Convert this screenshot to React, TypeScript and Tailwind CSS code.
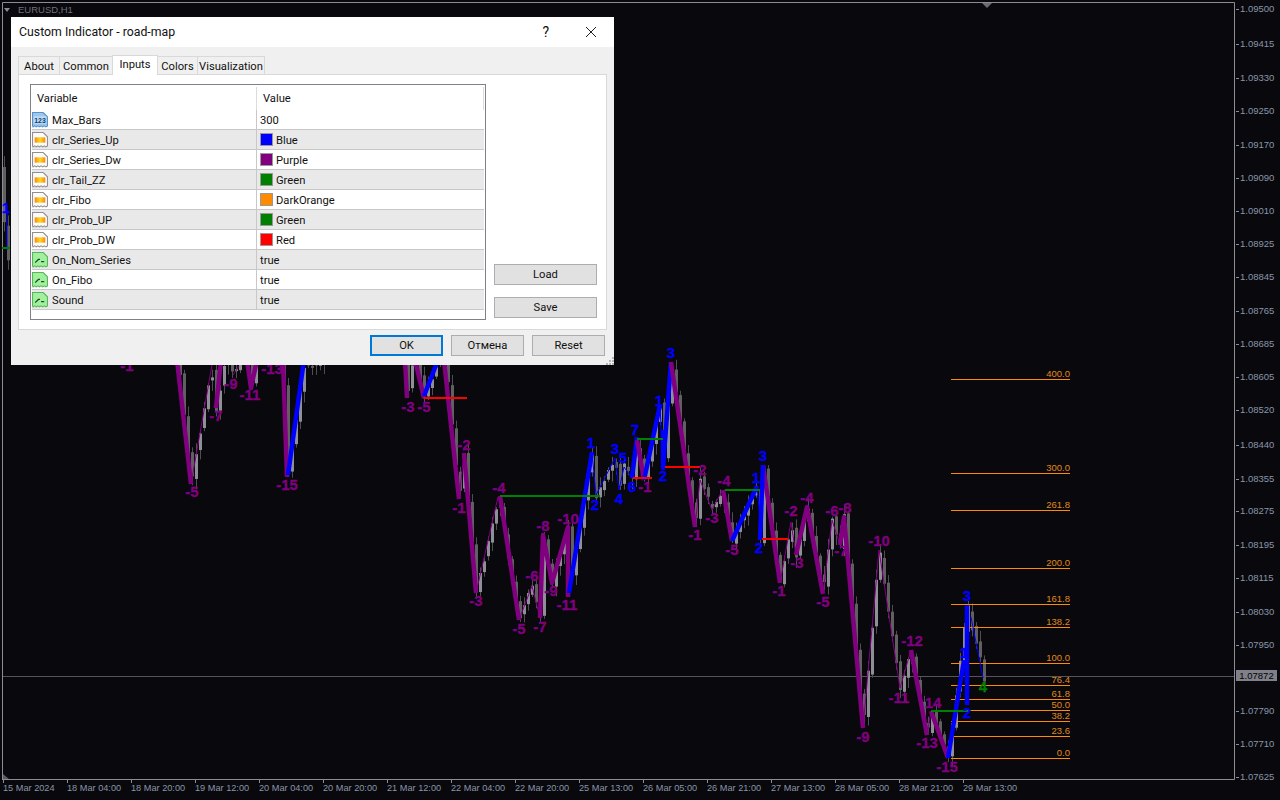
import React from "react";

const prices: [string, number][] = [
  ["1.09500", 8], ["1.09415", 43], ["1.09330", 77], ["1.09250", 110], ["1.09170", 144], ["1.09090", 177],
  ["1.09010", 210], ["1.08925", 243], ["1.08845", 276], ["1.08765", 310], ["1.08685", 343], ["1.08605", 376],
  ["1.08520", 409], ["1.08440", 444], ["1.08355", 478], ["1.08275", 510], ["1.08195", 544], ["1.08115", 577],
  ["1.08030", 611], ["1.07950", 644], ["1.07790", 710], ["1.07710", 743], ["1.07625", 776],
];
const times = ["15 Mar 2024", "18 Mar 04:00", "18 Mar 20:00", "19 Mar 12:00", "20 Mar 04:00", "20 Mar 20:00", "21 Mar 12:00", "22 Mar 04:00", "22 Mar 20:00", "25 Mar 13:00", "26 Mar 05:00", "26 Mar 21:00", "27 Mar 13:00", "28 Mar 05:00", "28 Mar 21:00", "29 Mar 13:00"];

type P = [number, number];
const PURPLE = "#800080";
const BLUE = "#0000ff";

// Every pivot of the price path, left to right: candles follow it
const path: P[] = [
  [3, 210], [7, 262], [11, 240], [60, 300], [120, 340], [177, 345], [191, 484], [205, 400], [211, 365], [216, 408], [227, 350],
  [233, 375], [239, 360], [247, 350], [251, 388], [257, 350], [272, 340], [283, 360], [287, 477], [304, 365], [322, 362], [360, 340],
  [406, 355], [407, 398], [414, 350], [424, 398], [437, 365], [445, 355], [459, 499], [464, 453], [476, 593], [498, 497], [519, 620],
  [532, 586], [540, 618], [543, 535], [552, 583], [568, 527], [568, 597], [592, 452], [596, 495], [615, 458], [619, 490], [624, 467],
  [632, 478], [637, 437], [644, 480], [660, 405], [663, 468], [671, 362], [695, 527], [700, 480], [712, 510], [722, 491], [732, 541],
  [757, 486], [760, 540], [763, 465], [780, 583], [791, 522], [796, 555], [807, 507], [823, 594], [832, 520], [840, 545], [844, 517],
  [863, 728], [879, 550], [900, 688], [911, 650], [927, 735], [931, 711], [948, 758], [967, 605], [984, 678],
];

function yAt(x: number) {
  for (let i = 1; i < path.length; i++) {
    if (x <= path[i][0]) {
      const [x0, y0] = path[i - 1];
      const [x1, y1] = path[i];
      return x1 === x0 ? y1 : y0 + ((y1 - y0) * (x - x0)) / (x1 - x0);
    }
  }
  return path[path.length - 1][1];
}

function makeCandles() {
  let seed = 41;
  const rnd = () => {
    seed = (seed * 16807) % 2147483647;
    return seed / 2147483647;
  };
  const out: { x: number; t: number; h: number; hi: number; lo: number; up: boolean }[] = [];
  for (let x = 4; x <= 984; x += 4) {
    const o = yAt(x - 4) + (rnd() - 0.5) * 8;
    const c = yAt(x) + (rnd() - 0.5) * 8;
    const t = Math.min(o, c);
    const h = Math.max(2, Math.abs(o - c));
    out.push({ x, t, h, hi: t - 2 - rnd() * 9, lo: t + h + 2 + rnd() * 9, up: c < o });
  }
  return out;
}
const candles = makeCandles();

const thick: { pts: P[]; c: string; w: number }[] = [
  { pts: [[177, 360], [191, 484]], c: PURPLE, w: 4.5 },
  { pts: [[221, 360], [216, 408]], c: PURPLE, w: 4.5 },
  { pts: [[247, 360], [251, 388], [257, 360]], c: PURPLE, w: 4.5 },
  { pts: [[283, 360], [287, 477]], c: PURPLE, w: 4.5 },
  { pts: [[288, 475], [304, 360]], c: BLUE, w: 4.5 },
  { pts: [[405, 360], [407, 398]], c: PURPLE, w: 4.5 },
  { pts: [[415, 360], [424, 398]], c: PURPLE, w: 4.5 },
  { pts: [[424, 396], [438, 360]], c: BLUE, w: 4.5 },
  { pts: [[444, 360], [459, 499]], c: PURPLE, w: 4.5 },
  { pts: [[464, 453], [476, 593]], c: PURPLE, w: 4.5 },
  { pts: [[500, 496], [519, 620]], c: PURPLE, w: 4.5 },
  { pts: [[540, 618], [543, 535], [552, 583], [568, 527], [568, 597]], c: PURPLE, w: 4.5 },
  { pts: [[569, 593], [592, 452]], c: BLUE, w: 4.5 },
  { pts: [[632, 478], [637, 437]], c: BLUE, w: 4.5 },
  { pts: [[637, 440], [644, 480]], c: PURPLE, w: 4.5 },
  { pts: [[644, 480], [660, 405]], c: BLUE, w: 4.5 },
  { pts: [[663, 430], [663, 468], [671, 362]], c: BLUE, w: 4.5 },
  { pts: [[671, 362], [695, 527]], c: PURPLE, w: 4.5 },
  { pts: [[723, 490], [732, 541]], c: PURPLE, w: 4.5 },
  { pts: [[732, 541], [757, 486]], c: BLUE, w: 4.5 },
  { pts: [[763, 465], [780, 583]], c: PURPLE, w: 4.5 },
  { pts: [[763, 465], [760, 540]], c: BLUE, w: 4.5 },
  { pts: [[796, 555], [807, 507], [823, 594]], c: PURPLE, w: 4.5 },
  { pts: [[840, 545], [844, 517], [863, 728]], c: PURPLE, w: 4.5 },
  { pts: [[911, 650], [927, 735]], c: PURPLE, w: 4.5 },
  { pts: [[931, 711], [948, 758]], c: PURPLE, w: 4.5 },
  { pts: [[948, 758], [964, 660]], c: BLUE, w: 4.5 },
  { pts: [[967, 605], [967, 705]], c: BLUE, w: 4.5 },
];
const thin: { pts: P[]; c: string }[] = [
  { pts: [[191, 484], [212, 365]], c: PURPLE },
  { pts: [[233, 375], [239, 366]], c: PURPLE },
  { pts: [[459, 499], [464, 453]], c: PURPLE },
  { pts: [[476, 593], [498, 497]], c: PURPLE },
  { pts: [[519, 620], [532, 586], [540, 618]], c: PURPLE },
  { pts: [[592, 452], [596, 495], [615, 458], [619, 490], [624, 467], [632, 478]], c: BLUE },
  { pts: [[660, 405], [663, 468]], c: BLUE },
  { pts: [[695, 527], [700, 480], [712, 510], [722, 491]], c: PURPLE },
  { pts: [[757, 486], [760, 520]], c: BLUE },
  { pts: [[780, 583], [791, 522], [796, 555]], c: PURPLE },
  { pts: [[823, 594], [832, 520], [840, 545]], c: PURPLE },
  { pts: [[863, 728], [879, 550], [900, 688], [911, 650]], c: PURPLE },
  { pts: [[927, 735], [931, 711]], c: PURPLE },
  { pts: [[971, 617], [983, 678]], c: BLUE },
  { pts: [[7, 205], [7, 250]], c: BLUE },
];
const hLines: [number, number, number, string][] = [
  [424, 467, 398, "#ff0000"],
  [500, 600, 496, "#008000"],
  [633, 652, 478, "#ff0000"],
  [637, 663, 439, "#008000"],
  [665, 700, 467, "#ff0000"],
  [725, 760, 490, "#008000"],
  [762, 788, 539, "#ff0000"],
  [931, 970, 711, "#008000"],
  [2, 10, 248, "#008000"],
];
const labels: [string, number, number, string][] = [
  ["-5", 192, 497, PURPLE], ["-7", 216, 421, PURPLE], ["-9", 231, 389, PURPLE], ["-11", 250, 400, PURPLE], ["-13", 272, 374, PURPLE],
  ["-15", 287, 490, PURPLE], ["-1", 127, 371, PURPLE], ["-3", 408, 412, PURPLE], ["-5", 424, 412, PURPLE], ["-2", 464, 450, PURPLE],
  ["-1", 459, 513, PURPLE], ["-3", 476, 606, PURPLE], ["-4", 499, 493, PURPLE], ["-5", 519, 634, PURPLE], ["-6", 532, 581, PURPLE],
  ["-7", 540, 632, PURPLE], ["-8", 543, 531, PURPLE], ["-9", 551, 596, PURPLE], ["-10", 568, 524, PURPLE], ["-11", 567, 610, PURPLE],
  ["1", 591, 448, BLUE], ["2", 595, 510, BLUE], ["3", 615, 454, BLUE], ["4", 619, 504, BLUE], ["5", 623, 463, BLUE], ["6", 632, 492, BLUE],
  ["7", 635, 435, BLUE], ["-1", 645, 492, PURPLE], ["1", 659, 406, BLUE], ["2", 663, 481, BLUE], ["3", 671, 358, BLUE],
  ["-2", 700, 475, PURPLE], ["-1", 695, 540, PURPLE], ["-3", 712, 523, PURPLE], ["-4", 724, 486, PURPLE], ["-5", 732, 555, PURPLE],
  ["1", 756, 483, BLUE], ["3", 763, 461, BLUE], ["2", 759, 553, BLUE], ["-1", 779, 596, PURPLE], ["-2", 791, 516, PURPLE],
  ["-3", 797, 568, PURPLE], ["-4", 807, 503, PURPLE], ["-5", 823, 607, PURPLE], ["-6", 832, 516, PURPLE], ["-8", 845, 513, PURPLE],
  ["-7", 841, 556, PURPLE], ["-10", 879, 546, PURPLE], ["-9", 863, 742, PURPLE], ["-11", 899, 703, PURPLE], ["-12", 912, 646, PURPLE],
  ["-13", 927, 748, PURPLE], ["14", 933, 708, PURPLE], ["-15", 947, 772, PURPLE], ["3", 967, 601, BLUE], ["1", 964, 658, BLUE],
  ["2", 967, 718, BLUE], ["4", 983, 692, "#008000"], ["1", 6, 213, BLUE],
];
const fibo: [string, number][] = [
  ["400.0", 379], ["300.0", 473], ["261.8", 510], ["200.0", 568], ["161.8", 604], ["138.2", 627], ["100.0", 663],
  ["76.4", 685], ["61.8", 699], ["50.0", 710], ["38.2", 721], ["23.6", 736], ["0.0", 758],
];

const str = (p: P[]) => p.map((q) => q.join(",")).join(" ");

function Chart() {
  return (
    <svg width={1236} height={782} className="block" style={{ fontFamily: "'Liberation Sans', sans-serif" }}>
      <path d="M2 779.5 H1234.5 V2.5 H2.5 V779" fill="none" stroke="#8c8c94" strokeWidth={1} />
      <path d="M3 774 L3 779 L9 779 Z" fill="#5a5a62" />
      <path d="M982 3 L992 3 L987 8 Z" fill="#6b6b73" />
      <path d="M4 8 L10 8 L7 12 Z" fill="#8a8a90" />
      <line x1={3} x2={1234} y1={676.5} y2={676.5} stroke="#55555c" />
      {candles.map((c) => (
        <g key={c.x} fill={c.up ? "#8f8f98" : "#606060"} stroke="none">
          <rect x={c.x} y={c.hi} width={1} height={c.lo - c.hi} fill="#4f4f53" />
          <rect x={c.x - 1} y={c.t} width={3} height={c.h} />
        </g>
      ))}
      <polyline points="948,755 950,740 953,722 956,700" fill="none" stroke="#ff8c00" strokeWidth={1} strokeDasharray="3 2" />
      {fibo.map(([t, y]) => (
        <g key={t}>
          <line x1={951} x2={1070} y1={y + 0.5} y2={y + 0.5} stroke="#ff8c00" />
          <text x={1070} y={y - 2} textAnchor="end" fontSize={9.5} fill="#e08a1e">{t}</text>
        </g>
      ))}
      {thin.map((l, i) => (
        <polyline key={i} points={str(l.pts)} fill="none" stroke={l.c} strokeWidth={1} />
      ))}
      {thick.map((l, i) => (
        <polyline key={i} points={str(l.pts)} fill="none" stroke={l.c} strokeWidth={l.w} strokeLinejoin="round" />
      ))}
      {hLines.map(([a, b, y, c], i) => (
        <line key={i} x1={a} x2={b} y1={y} y2={y} stroke={c} strokeWidth={2} />
      ))}
      {labels.map(([t, x, y, c], i) => (
        <text key={i} x={x} y={y} textAnchor="middle" fontSize={15} fontWeight={700} fill={c} stroke={c} strokeWidth={0.3}>{t}</text>
      ))}
    </svg>
  );
}

const JAG = "M1 1.5 H11 L15 5.5 V14 L13.5 15 L12 14 L10.5 15 L9 14 L7.5 15 L6 14 L4.5 15 L3 14 L1.5 15 L1 14 Z";

function IntIcon() {
  return (
    <svg width={16} height={16} viewBox="0.5 1 15 15" className="shrink-0">
      <path d={JAG} fill="#9cc8ee" stroke="#5b93c9" />
      <rect x={2} y={5} width={12} height={7} fill="#bcdcf5" />
      <text x={8} y={11} textAnchor="middle" fontSize={6.5} fontWeight={700} fill="#14406e" fontFamily="'Liberation Sans', sans-serif">123</text>
    </svg>
  );
}
function ColorIcon() {
  return (
    <svg width={16} height={16} viewBox="0.5 1 15 15" className="shrink-0">
      <defs>
        <linearGradient id="cg" x1="0" x2="1" y1="0" y2="0">
          <stop offset="0" stopColor="#f58a12" />
          <stop offset="0.5" stopColor="#ffd820" />
          <stop offset="1" stopColor="#f58a12" />
        </linearGradient>
      </defs>
      <path d={JAG} fill="#fbfbfb" stroke="#8f8f8f" />
      <rect x={3} y={6} width={10} height={5} fill="url(#cg)" />
    </svg>
  );
}
function BoolIcon() {
  return (
    <svg width={16} height={16} viewBox="0.5 1 15 15" className="shrink-0">
      <path d={JAG} fill="#a4eea0" stroke="#55b85a" />
      <path d="M3.5 11 L6.5 8 H8 M9 10 H12" fill="none" stroke="#0c5a1c" strokeWidth={1.2} />
    </svg>
  );
}

type Row = { name: string; kind: "int" | "color" | "bool"; value: string; swatch?: string };
const rows: Row[] = [
  { name: "Max_Bars", kind: "int", value: "300" },
  { name: "clr_Series_Up", kind: "color", value: "Blue", swatch: "#0000ff" },
  { name: "clr_Series_Dw", kind: "color", value: "Purple", swatch: "#800080" },
  { name: "clr_Tail_ZZ", kind: "color", value: "Green", swatch: "#008000" },
  { name: "clr_Fibo", kind: "color", value: "DarkOrange", swatch: "#ff8c00" },
  { name: "clr_Prob_UP", kind: "color", value: "Green", swatch: "#008000" },
  { name: "clr_Prob_DW", kind: "color", value: "Red", swatch: "#ff0000" },
  { name: "On_Nom_Series", kind: "bool", value: "true" },
  { name: "On_Fibo", kind: "bool", value: "true" },
  { name: "Sound", kind: "bool", value: "true" },
];

function Dialog() {
  const tabs: [string, string][] = [["About", "w-[42px]"], ["Common", "w-[54px]"], ["Inputs", "w-[46px]"], ["Colors", "w-[41px]"], ["Visualization", "w-[68px]"]];
  return (
    <div
      className="absolute left-[11px] top-[17px] w-[603px] h-[348px] bg-[#f0f0f0] text-[11.2px] leading-none text-[#111]"
      style={{ fontFamily: "Roboto, 'Noto Sans', sans-serif" }}
    >
      <div className="h-[30px] bg-white flex items-center pl-[8px] pr-[17px] pb-[1px]">
        <span className="flex-1 text-[12.3px] pt-[1px]">Custom Indicator - road-map</span>
        <span className="text-[14px] mr-[36px]">?</span>
        <svg width={12} height={12} viewBox="0 0 12 12">
          <path d="M1 1 L11 11 M11 1 L1 11" stroke="#222" strokeWidth={1} fill="none" />
        </svg>
      </div>
      <div className="flex items-end h-[27px] pl-[8px]">
        {tabs.map(([t, w]) => {
          const on = t === "Inputs";
          return (
            <div
              key={t}
              className={
                on
                  ? `${w} h-[20px] -ml-px flex items-center justify-center bg-white border border-b-0 border-[#d9d9d9] relative -mb-px z-10 pb-[2px]`
                  : `${w} h-[18px] -ml-px flex items-center justify-center bg-[#f0f0f0] border border-b-0 border-[#d9d9d9] pt-[2px]`
              }
            >
              {t}
            </div>
          );
        })}
      </div>
      <div className="ml-[7px] w-[589px] h-[256px] bg-white border border-[#d9d9d9] pt-[9px] pl-[11px]">
        <div className="w-[456px] h-[236px] border border-[#808088] flex flex-col">
          <div className="h-[25px] flex items-center shrink-0 pt-[2px]">
            <div className="w-[225px] pl-[6px]">Variable</div>
            <div className="w-px h-full bg-[#dcdcdc]" />
            <div className="pl-[6px]">Value</div>
            <div className="ml-auto w-px h-full bg-[#dcdcdc] mr-[1px]" />
          </div>
          {rows.map((r, i) => (
            <div
              key={r.name}
              className={`h-[20px] flex shrink-0 border-b border-[#c8c8c8] mr-[1px] ml-[1px] ${i % 2 === 1 ? "bg-[#e9e9e9]" : "bg-white"}`}
            >
              <div className="w-[224px] flex items-center">
                {r.kind === "int" ? <IntIcon /> : r.kind === "color" ? <ColorIcon /> : <BoolIcon />}
                <span className="ml-[4px] pt-[3px]">{r.name}</span>
              </div>
              <div className="w-px bg-[#c8c8c8]" />
              <div className="flex items-center pl-[3px]">
                {r.swatch ? (
                  <span className="w-[13px] h-[13px] border border-[#999] mr-[3px]" style={{ backgroundColor: r.swatch }} />
                ) : null}
                <span className="pt-[3px]">{r.value}</span>
              </div>
            </div>
          ))}
        </div>
      </div>
      <div className="absolute left-[483px] top-[247px] flex flex-col gap-[12px]">
        <div className="w-[103px] h-[21px] bg-[#e1e1e1] border border-[#adadad] flex items-center justify-center pt-[1px]">Load</div>
        <div className="w-[103px] h-[21px] bg-[#e1e1e1] border border-[#adadad] flex items-center justify-center pt-[1px]">Save</div>
      </div>
      <div className="flex justify-end gap-[8px] pr-[9px] pt-[5px]">
        <div className="w-[73px] h-[21px] bg-[#e1e1e1] border-2 border-[#0078d7] flex items-center justify-center">OK</div>
        <div className="w-[73px] h-[21px] bg-[#e1e1e1] border border-[#adadad] flex items-center justify-center">Отмена</div>
        <div className="w-[73px] h-[21px] bg-[#e1e1e1] border border-[#adadad] flex items-center justify-center">Reset</div>
      </div>
      <svg width={8} height={8} viewBox="0 0 8 8" className="absolute right-0 bottom-0">
        <path d="M6 0h2v2H6zM3 3h2v2H3zM6 3h2v2H6zM0 6h2v2H0zM3 6h2v2H3zM6 6h2v2H6z" fill="#b5b5b5" />
      </svg>
    </div>
  );
}

export default function App() {
  return (
    <div className="relative w-[1280px] h-[800px] overflow-hidden bg-[#08080d] text-[#8a96a8]">
      <div className="flex h-[782px]">
        <Chart />
        <div className="relative flex-1" style={{ fontFamily: "'Liberation Sans', sans-serif" }}>
          {prices.map(([p, y]) => (
            <div key={p} className="absolute left-0 flex items-center h-[12px] text-[9.5px] leading-none" style={{ top: y - 5 }}>
              <span className="w-[3px] h-px bg-[#8c8c94] mr-[1px]" />
              {p}
            </div>
          ))}
          <div className="absolute left-0 top-[670px] w-[41px] h-[11px] bg-[#80808a] text-black text-[9.5px] leading-[11px] text-center">1.07872</div>
        </div>
      </div>
      <div className="flex pl-[3px] text-[9.2px] leading-none h-[18px]" style={{ fontFamily: "'Liberation Sans', sans-serif" }}>
        {times.map((t) => (
          <div key={t} className="w-[64px] shrink-0 h-full relative">
            <span className="absolute left-0 top-[-2px] w-px h-[3px] bg-[#8c8c94]" />
            <span className="block pt-[2px]">{t}</span>
          </div>
        ))}
      </div>
      <div className="absolute left-[18px] top-[4px] text-[9.5px] leading-[12px] text-[#70707a]" style={{ fontFamily: "'Liberation Sans', sans-serif" }}>EURUSD,H1</div>
      <Dialog />
    </div>
  );
}
